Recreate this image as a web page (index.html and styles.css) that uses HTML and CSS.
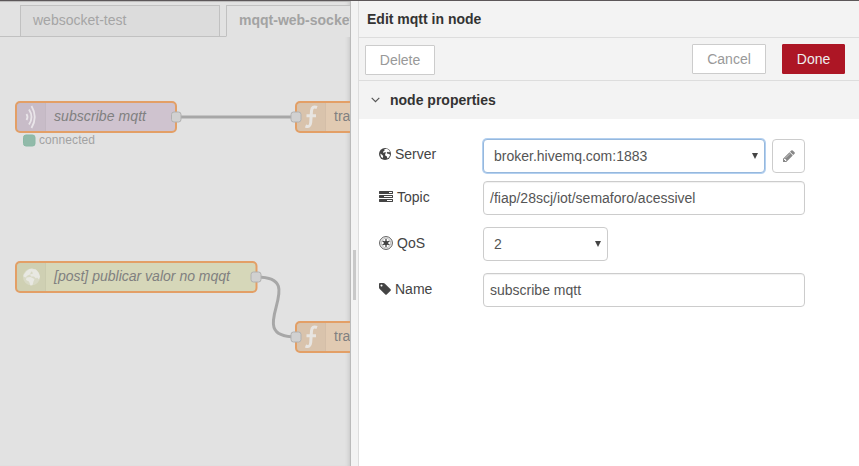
FILE: index.html
```html
<!DOCTYPE html>
<html lang="en">
<head>
<meta charset="utf-8">
<title>Flow editor</title>
<link rel="stylesheet" href="styles.css">
</head>
<body>
<div class="editor">
  <div class="workspace">
    <div class="tabs">
      <div class="tab">websocket-test</div>
      <div class="tab active">mqqt-web-socket</div>
    </div>
    <svg class="canvas" width="350" height="429" viewBox="0 37 350 429">
      <path class="wire" d="M176 117H296"/>
      <path class="wire" d="M257 277C312 277 240 337 296 337"/>
      <g>
        <rect class="node mqtt" x="16" y="102" width="160" height="30" rx="4"/>
        <path class="shade" d="M17 103h28v28h-28z"/><path class="divider" d="M45.500 103v28"/>
        <g class="waves"><path d="M26.500 114q2 3 0 6"/><path d="M29 109.500q5 7.500 0 15"/><path d="M31.500 106q6.500 11 0 22"/></g>
        <text class="label italic" x="54" y="121" textLength="92">subscribe mqtt</text>
        <rect class="port" x="171.500" y="112" width="9.500" height="10" rx="2.500"/>
        <rect class="status" x="23.500" y="135" width="11.500" height="11" rx="2.500"/>
        <text class="state" x="39" y="144" textLength="56">connected</text>
      </g>
      <g>
        <rect class="node http" x="16" y="262" width="240.500" height="30" rx="4"/>
        <path class="shade" d="M17 263h28v28h-28z"/><path class="divider" d="M45.500 263v28"/>
        <circle class="world" cx="31.500" cy="277" r="8.500"/>
        <path class="land" d="M23.500 275l3-4 3-2 3-.5.5 2-2 1.500-1 2.500-2.500 1-2 2-2-1zM33 269l3 .5 2.500 3 1.500 4-1 3-2-2-1 1-2-2-3 0-1-2 3-1-1-2zM26.500 277.500l4-.5 4 2-1 2.500-1 3.500-2 .5-1.500-4-3-1.500z"/>
        <text class="label italic" x="54" y="281" textLength="176">[post] publicar valor no mqqt</text>
        <rect class="port" x="251" y="272" width="10" height="10" rx="2.500"/>
      </g>
      <g id="function-node">
        <rect class="node func" x="296" y="102" width="120" height="30" rx="4"/>
        <path class="shade" d="M297 103h28v28h-28z"/><path class="divider" d="M325.500 103v28"/>
        <path class="fn" d="M317 107.500q-5-2-5.500 3.500l-.8 11.500q-.5 5.500-5.200 3.500M306.500 115.800h9.500"/>
        <text class="label" x="334" y="121">tra</text>
        <rect class="port" x="291" y="112" width="10" height="10" rx="2.500"/>
      </g>
      <use href="#function-node" y="220"/>
    </svg>
  </div>
  <div class="resizer"><div class="grip"></div></div>
  <section class="tray">
    <header class="title">Edit mqtt in node</header>
    <div class="toolbar">
      <button class="btn delete">Delete</button>
      <button class="btn cancel">Cancel</button>
      <button class="btn done">Done</button>
    </div>
    <div class="section-head">
      <svg width="9" height="6" viewBox="0 0 9 6"><path d="M.7.8l3.800 3.800L8.300.8" fill="none" stroke="#555" stroke-width="1.200"/></svg>
      <span>node properties</span>
    </div>
    <div class="form">
      <div class="row server">
        <div class="name">
          <svg width="12" height="14" viewBox="0 0 12 14"><circle cx="6" cy="7" r="6"/><path class="cut" d="M5.300 2.200l2.600-.5 2.200 1.600.8 1.500-.9.700-1-.8-1.200.9.200 1 2.200.3 1 1-1.400 2.700-1.500 1-.4-2.200-1.700-1-.1-1.600 1-.9-1-.8L4.500 6 4 4.800l1.500-1zM1.200 6.500l1.900 1.300 1.100 1.200-.5 2.200-1.700-1.500z"/></svg>Server
        </div>
        <div class="field select focus"><span>broker.hivemq.com:1883</span><i class="arrow"></i></div>
        <div class="field edit"><svg width="12" height="14" viewBox="128 0 1536 1792"><path d="M491 1536l91-91-235-235-91 91v107h128v128h107zm523-928q0-22-22-22-10 0-17 7l-542 542q-7 7-7 17 0 22 22 22 10 0 17-7l542-542q7-7 7-17zm-54-192l416 416-832 832h-416v-416zm683 96q0 53-37 90l-166 166-416-416 166-165q36-38 90-38 53 0 91 38l235 234q37 39 37 91z"/></svg></div>
      </div>
      <div class="row topic">
        <div class="name">
          <svg width="14" height="14" viewBox="0 0 1792 1792"><path d="M1024 1408h640v-128h-640v128zm-384-512h1024v-128h-1024v128zm640-512h384v-128h-384v128zm512 832v256q0 26-19 45t-45 19h-1664q-26 0-45-19t-19-45v-256q0-26 19-45t45-19h1664q26 0 45 19t19 45zm0-512v256q0 26-19 45t-45 19h-1664q-26 0-45-19t-19-45v-256q0-26 19-45t45-19h1664q26 0 45 19t19 45zm0-512v256q0 26-19 45t-45 19h-1664q-26 0-45-19t-19-45v-256q0-26 19-45t45-19h1664q26 0 45 19t19 45z"/></svg>Topic
        </div>
        <div class="field">/fiap/28scj/iot/semaforo/acessivel</div>
      </div>
      <div class="row qos">
        <div class="name">
          <svg width="14" height="14" viewBox="0 0 14 14"><circle class="ring" cx="7" cy="7" r="6.400"/><circle class="gear" cx="7" cy="7" r="4.800"/><path class="spokes" d="M7 3v8M3.500 5l7 4M3.500 9l7-4"/><circle cx="7" cy="7" r="2.300"/></svg>QoS
        </div>
        <div class="field select small"><span>2</span><i class="arrow"></i></div>
      </div>
      <div class="row node-name">
        <div class="name">
          <svg width="12" height="14" viewBox="128 0 1536 1792"><path d="M576 448q0-53-37.500-90.500t-90.500-37.500-90.500 37.500-37.500 90.500 37.500 90.500 90.500 37.500 90.500-37.500 37.500-90.500zm1067 576q0 53-37 90l-491 492q-39 37-91 37-53 0-90-37l-715-716q-38-37-64.500-101t-26.500-117v-416q0-52 38-90t90-38h416q53 0 117 26.500t102 64.500l715 714q37 39 37 91z"/></svg>Name
        </div>
        <div class="field">subscribe mqtt</div>
      </div>
    </div>
  </section>
</div>
</body>
</html>
```
FILE: styles.css
```css
* { box-sizing: border-box; }
body { margin: 0; overflow: hidden; background: #fff; font: 14px/20px "Liberation Sans", Arial, sans-serif; color: #444; }
.editor { display: flex; height: 466px; border-top: 1px solid #5c5759; }
.workspace { width: 350px; overflow: hidden; background: #e2e2e2; border-top: 1px solid #bdbcbc; box-shadow: inset -4px 0 4px -3px #c4c4c4; }
.tabs { display: flex; height: 35px; padding: 3px 0 0 20px; gap: 6px; border-bottom: 1px solid #c1c1c1; }
.tab { flex: none; width: 200px; height: 32px; padding: 4px 12px; border: 1px solid #c1c1c1; background: #dcdcdc; color: #a5a5a5; white-space: nowrap; overflow: hidden; }
.tab.active { background: #e2e2e2; border-bottom-color: #e2e2e2; font-weight: bold; color: #a3a3a3; }
.canvas { display: block; }
.wire { fill: none; stroke: #a7a7a7; stroke-width: 3; }
.node { stroke: #e39f66; stroke-width: 2; }
.mqtt { fill: #cfc3cf; }
.http { fill: #d6d7b9; }
.func { fill: #e1cab2; }
.shade { fill: #000; opacity: .03; }
.divider { stroke: #000; opacity: .05; }
.waves { fill: none; stroke: #e9e5e9; stroke-width: 1.800; }
.fn { fill: none; stroke: #e8e5e1; stroke-width: 3; }
.world { fill: #d8d9c5; }
.land { fill: #e8e8e2; }
.label { fill: #808080; }
.italic { font-style: italic; }
.state { font-size: 12px; fill: #a2a2a2; }
.port { fill: #d1d1d1; stroke: #b1b1b1; }
.status { fill: #91baa9; stroke: #8ab8a4; }
.resizer { display: flex; align-items: center; width: 9px; padding: 83px 0 0 2px; background: #f3f3f3; border-left: 1px solid #bbb; border-right: 1px solid #ddd; }
.grip { width: 3px; height: 50px; background: #c9c9c9; }
.tray { flex: 1; background: #fff; }
.title { height: 37px; padding: 8px 8px; background: #f3f3f3; border-bottom: 1px solid #ddd; font-weight: bold; color: #333; }
.toolbar { display: flex; height: 43px; padding: 6px 14px 0 6px; background: #f3f3f3; border-bottom: 1px solid #ddd; }
.btn { height: 30px; padding: 0; border: 1px solid #ccc; background: #fff; color: #999; font: inherit; border-radius: 1px; }
.delete { width: 70px; margin-top: 1px; }
.cancel { width: 74px; margin-left: auto; margin-right: 16px; }
.done { width: 63px; color: #eee; background: #ad1625; border-color: #ad1625; }
.section-head { display: flex; align-items: center; gap: 10px; height: 38px; padding-left: 12px; background: #f3f3f3; font-weight: bold; color: #333; }
.form { padding: 20px 0 0 20px; }
.row { display: flex; height: 34px; }
.name { display: flex; align-items: center; gap: 4px; width: 104px; height: 20px; margin-top: 5px; }
.name svg { fill: #444; }
.name .cut { fill: #fff; }
.name .ring { fill: none; stroke: #555; stroke-width: 1; }
.name .gear { fill: none; stroke: #aaa; stroke-width: .800; }
.spokes { stroke: #444; stroke-width: 1.300; }
.field { display: flex; align-items: center; width: 322px; height: 34px; padding: 0 6px; border: 1px solid #ccc; border-radius: 4px; background: #fff; color: #555; box-shadow: inset 0 1px 1px rgba(0,0,0,.06); }
.select { justify-content: space-between; padding-left: 10px; box-shadow: none; }
.focus { width: 282px; border-color: #96b8dd; box-shadow: 0 0 0 1px #b3d0f0; }
.small { width: 125px; }
.arrow { border: 3.500px solid transparent; border-top: 6px solid #444; border-bottom: 0; }
.edit { width: 33px; margin-left: 7px; padding: 0; justify-content: center; box-shadow: none; }
.edit svg { fill: #888; }
.topic { margin-top: 8px; }
.qos, .node-name { margin-top: 12px; }
.topic .name, .qos .name, .node-name .name { margin-top: 6px; }
```
